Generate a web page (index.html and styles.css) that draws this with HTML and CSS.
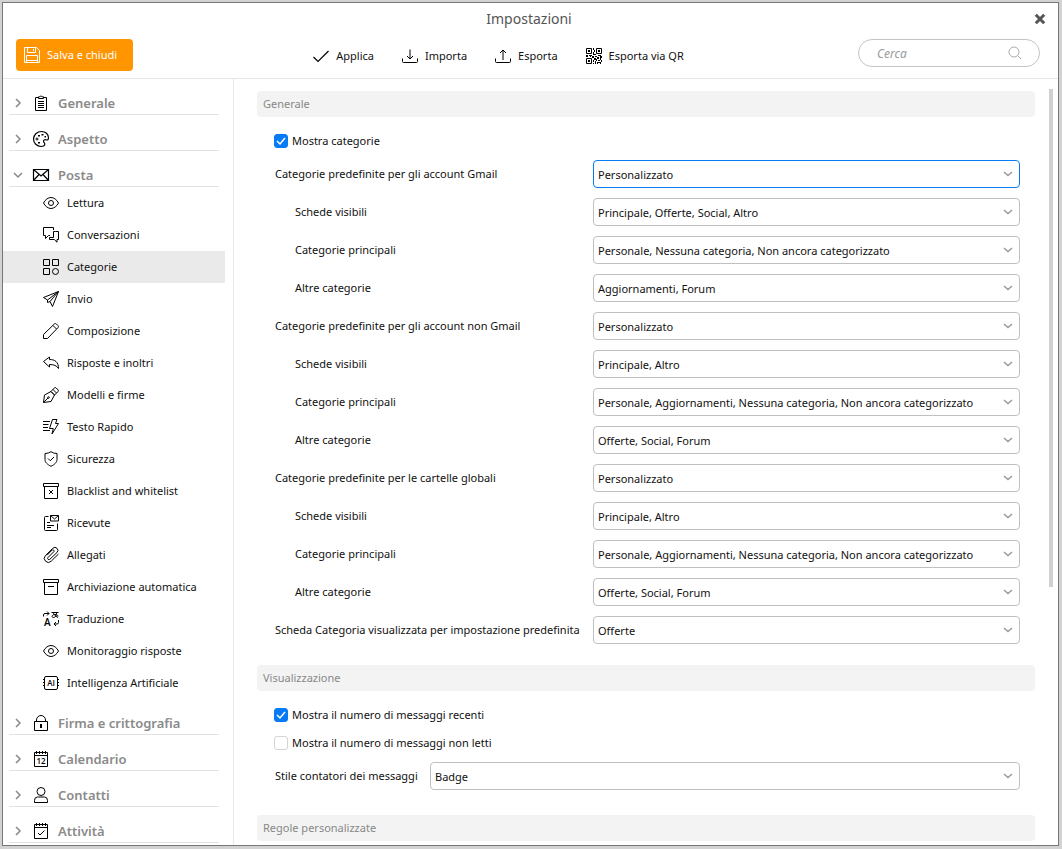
FILE: index.html
```html
<!DOCTYPE html>
<html lang="it">
<head>
<meta charset="utf-8">
<title>Impostazioni</title>
<link rel="stylesheet" href="styles.css">
</head>
<body>
<svg class="sprite" aria-hidden="true">
  <symbol id="chevron" viewBox="0 0 10 10"><path d="M3 1l4 4-4 4"/></symbol>
  <symbol id="eye" viewBox="0 0 16 16"><path d="M.5 8C2.300 4.700 5 2.500 8 2.500S13.700 4.700 15.500 8C13.700 11.300 11 13.500 8 13.500S2.300 11.300.5 8z"/><circle cx="8" cy="8" r="2.500"/></symbol>
</svg>
<div class="window">
  <header class="header">
    <div class="titlebar">
      <h1 class="title">Impostazioni</h1>
      <button class="close" aria-label="Chiudi"><svg viewBox="0 0 10 10"><path d="M1.500 1.500l7 7M8.500 1.500l-7 7"/></svg></button>
    </div>
    <div class="toolbar">
      <button class="save"><svg class="icon" viewBox="0 0 16 16"><path d="M.5.5h12l3 3v12H.5zM3.500.5v5h8v-5M9.500 2v2M2.500 15v-6.500h11V15M2.500 13.500h11"/></svg>Salva e chiudi</button>
      <div class="actions">
        <button class="action"><svg class="icon" viewBox="0 0 16 16"><path d="M.5 9l4.500 4.500L15.500 3" stroke-width="1.200"/></svg>Applica</button>
        <button class="action"><svg class="icon" viewBox="0 0 16 16"><path d="M.5 10.500v3q0 1 1 1h13q1 0 1-1v-3M8 1.500v9.500M5 8l3 3 3-3"/></svg>Importa</button>
        <button class="action"><svg class="icon" viewBox="0 0 16 16"><path d="M.5 10.500v3q0 1 1 1h13q1 0 1-1v-3M8 12V2M5 5l3-3 3 3"/></svg>Esporta</button>
        <button class="action"><svg class="icon" viewBox="0 0 16 16"><path d="M.5.5h5v5h-5zM10.500.5h5v5h-5zM.5 10.500h5v5h-5z"/><path class="solid" d="M2 2h2v2H2zM12 2h2v2h-2zM2 12h2v2H2zM7 0h1v2H7zM8 2h1v2H8zM7 4h1v3H7zM8 6h2v1H8zM0 7h2v2H0zM3 7h3v1H3zM4 8h1v1H4zM6 8h2v2H6zM9 8h2v1H9zM12 7h3v1h-3zM14 8h2v2h-2zM11 9h2v2h-2zM8 10h2v2H8zM7 12h1v2H7zM10 11h1v2h-1zM12 12h2v1h-2zM14 10h1v2h-1zM15 12h1v2h-1zM9 13h1v3H9zM11 14h3v1h-3zM14 14h1v2h-1zM7 15h1v1H7zM11 15h1v1h-1z"/></svg>Esporta via QR</button>
      </div>
      <label class="search"><input type="search" placeholder="Cerca" aria-label="Cerca"><svg viewBox="0 0 14 14"><circle cx="6" cy="6" r="5"/><path d="M9.500 9.500l3.500 3.500"/></svg></label>
    </div>
  </header>
  <div class="body">
    <nav class="sidebar" aria-label="Sezioni">
      <button class="group"><svg class="chevron"><use href="#chevron"/></svg><svg class="icon" viewBox="0 0 16 16"><path d="M5 2.500H2.500v13h11v-13H11M5.500 3.500V1.800h1.300a1.300 1.300 0 0 1 2.400 0h1.300v1.700zM5 6.500h6M5 8.500h6M5 10.500h6M5 12.500h6"/></svg>Generale</button>
      <button class="group"><svg class="chevron"><use href="#chevron"/></svg><svg class="icon" viewBox="0 0 16 16"><path d="M8.500.5C4 .5.5 4 .5 8S4 15.500 8 15.500c2.500 0 4-1 3.800-2.500-.2-1.200-1.300-1.500-1.300-2.700 0-1.300 1-1.900 2.300-1.500 1.500.5 2.700 0 2.700-1.800C15.500 3 12.500.5 8.500.5z" stroke-width="1.200"/><circle cx="4" cy="8" r="1"/><path class="solid" d="M5 4h2v1.500H5zM8.500 3h2v1.500h-2zM11.500 5h1.500v1.500h-1.500zM5 11h2v1.500H5z"/></svg>Aspetto</button>
      <button class="group open" aria-expanded="true"><svg class="chevron"><use href="#chevron"/></svg><svg class="icon" viewBox="0 0 16 16"><path d="M.5 2.500h15v11H.5zM.5 2.500L8 9l7.500-6.500M.5 13.500l5.500-6M15.500 13.500l-5.500-6" stroke-width="1.200"/></svg>Posta</button>
      <ul class="items">
        <li><a class="item" href="#"><svg class="icon"><use href="#eye"/></svg>Lettura</a></li>
        <li><a class="item" href="#"><svg class="icon" viewBox="0 0 16 16"><path d="M10.500 3V.5H.5v8h2v3l3-3H7M12.500 4.500h3v8h-1.500v2.700l-2.700-2.700h-4.800v-2h4v-6z"/></svg>Conversazioni</a></li>
        <li><a class="item selected" href="#" aria-current="page"><svg class="icon" viewBox="0 0 16 16"><path d="M.5.5h6v6h-6zM9.500.5h6v6h-6zM.5 9.500h6v6h-6z"/><circle cx="12.500" cy="12.500" r="3"/></svg>Categorie</a></li>
        <li><a class="item" href="#"><svg class="icon" viewBox="0 0 16 16"><path d="M15.500.5L.5 6.500l4 2.500L15.500.5l-6 15L7 10.500zM4.500 9v2.500L7 10.500"/></svg>Invio</a></li>
        <li><a class="item" href="#"><svg class="icon" viewBox="0 0 16 16"><path d="M.5 15.500v-4L11.500.8q1-.6 2 .3l1.400 1.400q.9 1 .2 2L4.500 15.500zM10 2.500l3.500 3.500"/></svg>Composizione</a></li>
        <li><a class="item" href="#"><svg class="icon" viewBox="0 0 16 16"><path d="M.5 6.500L6.500 2v2.500C12 4.500 15.500 7 15.500 13.500c-2-3-4.500-4-9-4v2.500z"/></svg>Risposte e inoltri</a></li>
        <li><a class="item" href="#"><svg class="icon" viewBox="0 0 16 16"><path d="M.5 15.500l1-7.500 6.500-3.500 3.500 3.500L8 14.500zM.5 15.500L5 11M8 4.500L11.500.8q.8-.6 1.500 0l2.200 2.200q.6.7 0 1.500L11.500 8zM10 2.500L13.500 6"/><circle cx="5.500" cy="10.500" r=".8"/></svg>Modelli e firme</a></li>
        <li><a class="item" href="#"><svg class="icon" viewBox="0 0 16 16"><path d="M0 2.500h7M0 5.500h5.500M0 8.500h5M0 11.500h7M9.500.5h4.500l-1.500 4h3L9 15l1.300-5.500H6.500z"/></svg>Testo Rapido</a></li>
        <li><a class="item" href="#"><svg class="icon" viewBox="0 0 16 16"><path d="M8 .7q2.500 1.800 6 1.800v6c0 3-2.500 5-6 6.800-3.500-1.800-6-3.800-6-6.800v-6q3.500 0 6-1.800zM5 7.500l2.200 2.200L11 6"/></svg>Sicurezza</a></li>
        <li><a class="item" href="#"><svg class="icon" viewBox="0 0 16 16"><path d="M.5.5h15v3H.5zM1.500 3.500v12h13v-12M6 7l4 4M10 7l-4 4"/></svg>Blacklist and whitelist</a></li>
        <li><a class="item" href="#"><svg class="icon" viewBox="0 0 16 16"><path d="M5.500 1.500h-3q-1 0-1 1v12q0 1 1 1h11q1 0 1-1V8.500M7.500.5h8v5.500h-8zM7.500.5l4 3.500 4-3.500M4 7.500h3M4 10.500h7M4 12.500h4"/></svg>Ricevute</a></li>
        <li><a class="item" href="#"><svg class="icon" viewBox="0 0 16 16"><path d="M11 4.500l-6 6a1.200 1.200 0 0 0 1.800 1.800L14 5.500a2.900 2.900 0 0 0-4.200-4.200L2.500 8.500a4 4 0 0 0 5.700 5.700L15.500 7M11 4.500a1.300 1.300 0 0 0-1.900-1.500L4 8.300"/></svg>Allegati</a></li>
        <li><a class="item" href="#"><svg class="icon" viewBox="0 0 16 16"><path d="M.5.5h15v3H.5zM1.500 3.500v12h13v-12M5 7.500h6"/></svg>Archiviazione automatica</a></li>
        <li><a class="item" href="#"><svg class="icon" viewBox="0 0 16 16"><path d="M.5 5.500V4q0-1.500 1.500-1.500h4M4 .5l2 2-2 2M8.500 1.500h7M10.500 1.500c0 2 1.500 3.500 4.500 5M13.500 1.500c0 3-1 5-3 5-2.500 0-1.500-3 1-3 3 0 3.500 1 3.500 2M15.500 9v2.500q0 1.500-1.500 1.500h-3M13 11l-2 2 2 2"/><text x="1" y="15" class="glyph large">A</text></svg>Traduzione</a></li>
        <li><a class="item" href="#"><svg class="icon"><use href="#eye"/></svg>Monitoraggio risposte</a></li>
        <li><a class="item" href="#"><svg class="icon" viewBox="0 0 16 16"><rect x="1.500" y="1.500" width="13" height="13" rx="1.500"/><path d="M0 4.500h1.500M0 7.500h1.500M0 10.500h1.500M14.500 4.500H16M14.500 7.500H16M14.500 10.500H16"/><text x="8" y="11" text-anchor="middle" class="glyph">AI</text></svg>Intelligenza Artificiale</a></li>
      </ul>
      <button class="group"><svg class="chevron"><use href="#chevron"/></svg><svg class="icon" viewBox="0 0 16 16"><path d="M1.500 6.500h13v9h-13zM3.500 6.500V5a4.500 4.500 0 0 1 9 0v1.500"/><path class="solid" d="M7 9h2v4H7z"/></svg>Firma e crittografia</button>
      <button class="group"><svg class="chevron"><use href="#chevron"/></svg><svg class="icon" viewBox="0 0 16 16"><path d="M1.500 1.500h13v14h-13zM1.500 4.500h13M3.500 0v3M6.500 0v3M9.500 0v3M12.500 0v3"/><text x="8" y="13" text-anchor="middle" class="glyph">12</text></svg>Calendario</button>
      <button class="group"><svg class="chevron"><use href="#chevron"/></svg><svg class="icon" viewBox="0 0 16 16"><circle cx="8" cy="4.500" r="4"/><path d="M1.500 15.500v-2q0-3.500 3-3.500h7q3 0 3 3.500v2z"/></svg>Contatti</button>
      <button class="group"><svg class="chevron"><use href="#chevron"/></svg><svg class="icon" viewBox="0 0 16 16"><path d="M1.500 1.500h13v14h-13zM1.500 4.500h13M3.500 0v3M6.500 0v3M9.500 0v3M12.500 0v3M5 10l2 2 4.500-4.500"/></svg>Attività</button>
    </nav>
    <main class="content">
      <section>
        <h2 class="section-title">Generale</h2>
        <div class="checks">
          <label class="check"><input type="checkbox" checked>Mostra categorie</label>
        </div>
        <div class="fields">
          <label for="gmail">Categorie predefinite per gli account Gmail</label><select id="gmail" class="active"><option>Personalizzato</option></select>
          <label class="sub" for="g1">Schede visibili</label><select id="g1"><option>Principale, Offerte, Social, Altro</option></select>
          <label class="sub" for="g2">Categorie principali</label><select id="g2"><option>Personale, Nessuna categoria, Non ancora categorizzato</option></select>
          <label class="sub" for="g3">Altre categorie</label><select id="g3"><option>Aggiornamenti, Forum</option></select>
          <label for="other">Categorie predefinite per gli account non Gmail</label><select id="other"><option>Personalizzato</option></select>
          <label class="sub" for="o1">Schede visibili</label><select id="o1"><option>Principale, Altro</option></select>
          <label class="sub" for="o2">Categorie principali</label><select id="o2"><option>Personale, Aggiornamenti, Nessuna categoria, Non ancora categorizzato</option></select>
          <label class="sub" for="o3">Altre categorie</label><select id="o3"><option>Offerte, Social, Forum</option></select>
          <label for="global">Categorie predefinite per le cartelle globali</label><select id="global"><option>Personalizzato</option></select>
          <label class="sub" for="c1">Schede visibili</label><select id="c1"><option>Principale, Altro</option></select>
          <label class="sub" for="c2">Categorie principali</label><select id="c2"><option>Personale, Aggiornamenti, Nessuna categoria, Non ancora categorizzato</option></select>
          <label class="sub" for="c3">Altre categorie</label><select id="c3"><option>Offerte, Social, Forum</option></select>
          <label for="tab">Scheda Categoria visualizzata per impostazione predefinita</label><select id="tab"><option>Offerte</option></select>
        </div>
      </section>
      <section>
        <h2 class="section-title">Visualizzazione</h2>
        <div class="checks">
          <label class="check"><input type="checkbox" checked>Mostra il numero di messaggi recenti</label>
          <label class="check"><input type="checkbox">Mostra il numero di messaggi non letti</label>
        </div>
        <div class="fields compact">
          <label for="style">Stile contatori dei messaggi</label><select id="style"><option>Badge</option></select>
        </div>
      </section>
      <section>
        <h2 class="section-title">Regole personalizzate</h2>
      </section>
      <div class="scroll-thumb"></div>
    </main>
  </div>
</div>
</body>
</html>
```
FILE: styles.css
```css
* { box-sizing: border-box; }

body {
  margin: 0;
  height: 100vh;
  padding: 2px 3px 3px 2px;
  background: #d2d2d2;
  color: #111;
  font: 11px/16px "Noto Sans", "Open Sans", sans-serif;
}

h1, h2, ul { margin: 0; padding: 0; font: inherit; }
ul { list-style: none; }

button {
  border: 0;
  padding: 0;
  background: none;
  color: inherit;
  font: inherit;
  text-align: left;
}

svg { flex: none; overflow: visible; fill: none; stroke: currentColor; }
.sprite { display: none; }
.icon { width: 16px; height: 16px; color: #000; }
.solid { fill: currentColor; stroke: none; }
.glyph { fill: currentColor; stroke: none; font: 600 8px "Open Sans", sans-serif; }
.large { font-size: 10px; }

.window {
  display: flex;
  flex-direction: column;
  height: 100%;
  border: 1px solid #777;
  background: #fff;
}

.header { border-bottom: 1px solid #e5e5e5; }

.titlebar {
  display: grid;
  grid-template-columns: 30px 1fr 30px;
  align-items: center;
  height: 32px;
  padding-right: 3px;
}
.title { grid-column: 2; text-align: center; font-size: 14px; line-height: 20px; color: #555; }
.close { display: flex; justify-content: center; }
.close svg { width: 12px; height: 12px; color: #555; stroke-width: 2.5; }

.toolbar { display: flex; align-items: flex-start; padding: 4px 18px 6px 13px; }
.save {
  display: flex;
  align-items: center;
  gap: 7px;
  height: 32px;
  padding: 0 16px 0 8px;
  border-radius: 4px;
  background: #ff9500;
  color: #fff;
}
.save .icon { color: #fff; }
.actions { display: flex; flex: 1; justify-content: center; gap: 28px; padding: 1px 0 0 6px; }
.action { display: flex; align-items: center; gap: 7px; height: 32px; }

.search { position: relative; width: 182px; }
.search input {
  width: 100%;
  height: 28px;
  padding: 0 36px 0 18px;
  border: 1px solid #c4c4c4;
  border-radius: 14px;
  font: inherit;
  font-size: 12px;
  outline: 0;
}
.search input::placeholder { color: #9a9a9a; font-style: italic; }
.search svg { position: absolute; right: 18px; top: 7px; width: 14px; height: 14px; color: #aaa; }

.body { display: flex; flex: 1; min-height: 0; }

.sidebar { flex: none; width: 231px; overflow: hidden; border-right: 1px solid #e8e8e8; }
.group {
  display: flex;
  align-items: center;
  width: 210px;
  height: 36px;
  margin-left: 6px;
  padding-top: 12px;
  border-bottom: 1px solid #e2e2e2;
  color: #8a8a8a;
  font-size: 13px;
  font-weight: 600;
}
.group .icon { margin: 0 9px 0 10px; }
.chevron { width: 10px; height: 10px; margin-left: 4px; color: #888; stroke-width: 1.5; }
.open .chevron { transform: rotate(90deg); }
.item {
  display: flex;
  align-items: center;
  gap: 8px;
  width: 222px;
  height: 32px;
  padding-left: 40px;
  color: inherit;
  text-decoration: none;
}
.selected { background: #eaeaea; }

.content { position: relative; flex: 1; min-width: 0; overflow: hidden; padding: 12px 23px 0; }
.section-title {
  height: 26px;
  padding: 0 6px;
  border-radius: 4px;
  background: #f3f3f3;
  color: #888;
  line-height: 26px;
}
.checks { padding: 10px 0 5px 17px; }
.check { display: flex; align-items: center; gap: 4px; height: 28px; }
.check input {
  appearance: none;
  width: 14px;
  height: 14px;
  margin: 0;
  border: 1px solid #d4d4d4;
  border-radius: 3px;
  background: #fff;
}
.check input:checked {
  border-color: #077bf5;
  background: #077bf5 url("data:image/svg+xml,%3Csvg xmlns='http://www.w3.org/2000/svg' viewBox='0 0 12 12'%3E%3Cpath d='M2 6l3 3 5-6' fill='none' stroke='white' stroke-width='1.500'/%3E%3C/svg%3E") center / 12px no-repeat;
}

.fields {
  display: grid;
  grid-template-columns: 308px 1fr;
  grid-auto-rows: 28px;
  gap: 10px;
  align-items: center;
  padding: 0 15px 21px 18px;
  white-space: nowrap;
}
.compact { grid-template-columns: 145px 1fr; padding-bottom: 25px; }
.sub { padding-left: 20px; }

select {
  appearance: none;
  min-width: 0;
  height: 28px;
  padding: 1px 24px 0 4px;
  border: 1px solid #c0c0c0;
  border-radius: 4px;
  background: #fff url("data:image/svg+xml,%3Csvg xmlns='http://www.w3.org/2000/svg' viewBox='0 0 10 6'%3E%3Cpath d='M1 1l4 3.500 4-3.500' fill='none' stroke='%23999' stroke-width='1.500'/%3E%3C/svg%3E") right 6px center / 10px 6px no-repeat;
  color: inherit;
  font: inherit;
}
.active { border-color: #077bf5; }

.scroll-thumb { position: absolute; top: 10px; right: 5px; width: 4px; height: 65%; background: #d0d0d0; }
```
